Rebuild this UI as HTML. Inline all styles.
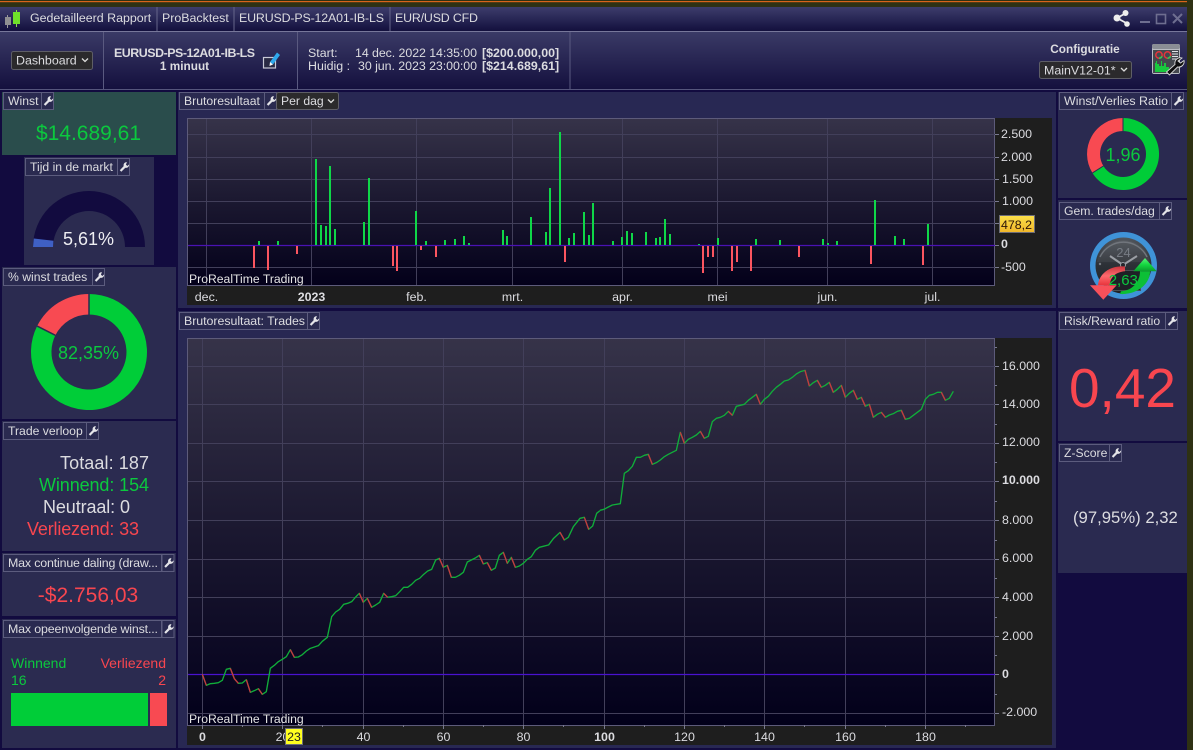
<!DOCTYPE html>
<html>
<head>
<meta charset="utf-8">
<style>
html,body{margin:0;padding:0;background:#120b3f;width:1193px;height:750px;overflow:hidden}
svg{display:block;position:absolute;left:0;top:0}
text{font-family:"Liberation Sans",sans-serif;font-size:12.4px;fill:#dcdce0}
.b{font-weight:bold}
.g{fill:#0bc93e}
.r{fill:#f8464f}
.m{text-anchor:middle}
.e{text-anchor:end}
.t{font-size:12.2px}
.lb{fill:#2a2a50;stroke:#5c5c7e;stroke-width:1}
.dd{fill:#2b2a2c;stroke:#5e5e66;stroke-width:1}
</style>
</head>
<body>
<svg width="1193" height="750" viewBox="0 0 1193 750" xmlns="http://www.w3.org/2000/svg">
<defs>
<linearGradient id="tb" x1="0" y1="0" x2="0" y2="1"><stop offset="0" stop-color="#3d3d6c"/><stop offset="1" stop-color="#13103d"/></linearGradient>
<linearGradient id="hd" x1="0" y1="0" x2="0" y2="1"><stop offset="0" stop-color="#3a3a66"/><stop offset="1" stop-color="#14103e"/></linearGradient>
<linearGradient id="pl1" x1="0" y1="0" x2="0" y2="1"><stop offset="0" stop-color="#363349"/><stop offset=".5" stop-color="#1b1830"/><stop offset="1" stop-color="#03001a"/></linearGradient>
<linearGradient id="pl2" x1="0" y1="0" x2="0" y2="1"><stop offset="0" stop-color="#363349"/><stop offset=".5" stop-color="#1b1830"/><stop offset=".85" stop-color="#0a0722"/><stop offset="1" stop-color="#02001a"/></linearGradient>
<linearGradient id="tag" x1="0" y1="0" x2="0" y2="1"><stop offset="0" stop-color="#fbe04a"/><stop offset="1" stop-color="#f0b62a"/></linearGradient>
<linearGradient id="gface" x1="0" y1="0" x2="0" y2="1"><stop offset="0" stop-color="#50555c"/><stop offset=".5" stop-color="#2c3036"/><stop offset="1" stop-color="#1f2227"/></linearGradient>
<linearGradient id="ra" x1="0" y1="0" x2="0" y2="1"><stop offset="0" stop-color="#c9343c"/><stop offset=".5" stop-color="#ff6a6e"/><stop offset="1" stop-color="#e8343c"/></linearGradient>
<linearGradient id="ga" x1="0" y1="0" x2="0" y2="1"><stop offset="0" stop-color="#5cf07a"/><stop offset=".5" stop-color="#14d840"/><stop offset="1" stop-color="#0a9c2c"/></linearGradient>
<g id="w"><path d="M9.4 3.2a3 3 0 0 0-3.2 3.9L2.3 11.2l1.5 1.5 4-4a3 3 0 0 0 3.8-3.3L9.9 7 8.4 5.6z" fill="#e4e4e8"/></g>
<path id="chev" d="M0 0l3 3 3-3" fill="none" stroke="#dcdcdc" stroke-width="1.3"/>
</defs>

<!-- frame -->
<rect width="1193" height="750" fill="#120b3f"/>
<rect width="1193" height="7" fill="#2e3113"/>
<rect y="1" width="1193" height="1.2" fill="#d9641a"/>
<rect x="1187" y="0" width="6" height="750" fill="#2e3113"/>

<!-- title bar -->
<rect y="7" width="1187" height="24" fill="url(#tb)"/>
<rect y="31" width="1187" height="1" fill="#77779a"/>
<path d="M157 7V31M234 7V31M390 7V31" stroke="#66668a"/>
<path d="M7.5 15V28" stroke="#9a9a9a"/><rect x="5" y="17" width="6" height="8" fill="#8f8f92"/>
<path d="M16.500 10V27" stroke="#8fe04a"/><rect x="13" y="12" width="7" height="12" fill="#6fe22a"/>
<text x="30" y="22">Gedetailleerd Rapport</text>
<text x="162" y="22">ProBacktest</text>
<text x="239" y="22" textLength="145">EURUSD-PS-12A01-IB-LS</text>
<text x="395" y="22" textLength="83">EUR/USD CFD</text>
<!-- share / window buttons -->
<g fill="#eeeeee" stroke="#eeeeee"><path d="M1128 12L1117 18L1128 24" fill="none" stroke-width="1.8"/><circle cx="1125.500" cy="13" r="3" stroke="none"/><circle cx="1117" cy="18" r="3.500" stroke="none"/><circle cx="1127" cy="24" r="2.800" stroke="none"/></g>
<rect x="1140" y="21" width="10" height="2" fill="#6e6e90"/>
<rect x="1156.500" y="14.500" width="9" height="9" fill="none" stroke="#6e6e90" stroke-width="1.600"/>
<path d="M1173 14L1182 23M1182 14L1173 23" stroke="#6e6e90" stroke-width="2"/>

<!-- header -->
<rect y="32" width="1187" height="57" fill="url(#hd)"/>
<rect y="89" width="1187" height="1" fill="#55557c"/>
<path d="M103.500 32V89M297.500 32V89M570 32V89" stroke="#5a5a80"/>
<rect x="11.500" y="51.500" width="81" height="18" rx="2" class="dd"/>
<text x="16" y="64.500">Dashboard</text>
<use href="#chev" x="82" y="58.500"/>
<text x="114" y="57" class="b" textLength="141">EURUSD-PS-12A01-IB-LS</text>
<text x="184.500" y="70" class="b m" style="font-size:11.800px">1 minuut</text>
<!-- edit icon -->
<rect x="263.500" y="57.500" width="12" height="10.500" fill="#2a2a44" stroke="#c9c9d6" stroke-width="1.200"/>
<path d="M270 62L277 52.500L280 55L273 64.500Z" fill="#2fa8ec"/><path d="M270 62L269.500 66L273 64.500Z" fill="#fff"/>
<text x="308" y="57">Start:</text>
<text x="308" y="70">Huidig :</text>
<text x="355" y="57" textLength="122">14 dec. 2022 14:35:00</text>
<text x="358" y="70" textLength="119">30 jun. 2023 23:00:00</text>
<text x="482" y="57" class="b">[$200.000,00]</text>
<text x="482" y="70" class="b">[$214.689,61]</text>
<text x="1085" y="53" class="b m" style="font-size:11.800px">Configuratie</text>
<rect x="1039.500" y="61.500" width="92" height="17" rx="2" class="dd"/>
<text x="1044" y="74.500">MainV12-01*</text>
<use href="#chev" x="1121" y="68"/>
<!-- config icon -->
<rect x="1152" y="44" width="28" height="30" rx="2" fill="#b9bcc2"/>
<rect x="1152" y="44" width="28" height="5" rx="2" fill="#8a8e95"/>
<rect x="1153" y="50" width="26" height="23" fill="#45484e"/>
<circle cx="1159" cy="55" r="3.200" fill="none" stroke="#e8343c" stroke-width="1.500"/>
<circle cx="1167.500" cy="55" r="3.200" fill="none" stroke="#e8343c" stroke-width="1.500"/>
<path d="M1159 58.200a3.200 3.200 0 0 0 3-2M1167.500 58.200a3.200 3.200 0 0 0 3-2" fill="none" stroke="#2ecc50" stroke-width="1.500"/>
<path d="M1172 51.500h6M1172 54h6M1172 56.500h6M1172 59h6" stroke="#e0e2e6"/>
<path d="M1155 72V63h1v-2h1v3h2v2h2v-5h1v5h2v-3h2v4h3v5z" fill="#18c93e"/>
<path d="M1182 58a5.500 5.500 0 0 0-7 6.500l-8.500 7.500 3 3 8-8a5.500 5.500 0 0 0 6.500-6.500l-3.500 2.500-2.500-2z" fill="#0e0e0e" stroke="#d8d8d8" stroke-width=".9"/>

<!-- left panels -->
<rect x="2" y="92" width="174" height="63" fill="#2a4d4c"/>
<rect x="24" y="157" width="130" height="108" fill="#2b2b50"/>
<rect x="2" y="267" width="174" height="152" fill="#2b2b50"/>
<rect x="2" y="421" width="174" height="130" fill="#2b2b50"/>
<rect x="2" y="553" width="174" height="63" fill="#2b2b50"/>
<rect x="2" y="619" width="174" height="129" fill="#2b2b50"/>

<!-- Winst -->
<rect x="3.500" y="92.500" width="38" height="17" class="lb"/><rect x="41.500" y="92.500" width="12" height="17" class="lb"/>
<text x="8" y="105" class="t">Winst</text><use href="#w" x="41.500" y="93"/>
<text x="88.500" y="140" class="m g" style="font-size:21px">$14.689,61</text>

<!-- Tijd -->
<rect x="25.500" y="158.500" width="92" height="17" class="lb"/><rect x="117.500" y="158.500" width="12" height="17" class="lb"/>
<text x="30" y="171" class="t">Tijd in de markt</text><use href="#w" x="117.500" y="159"/>
<path d="M33 247A56 56 0 0 1 145 247H125A36 36 0 0 0 53 247Z" fill="#120b3f"/>
<path d="M33 247L33.800 238.500L53.400 240.700L53 247Z" fill="#3f60c4"/>
<text x="88.500" y="245" class="m" style="font-size:18px;fill:#eeeef2">5,61%</text>

<!-- % winst -->
<rect x="3.500" y="268.500" width="89" height="17" class="lb"/><rect x="92.500" y="268.500" width="12" height="17" class="lb"/>
<text x="8" y="281" class="t">% winst trades</text><use href="#w" x="92.500" y="269"/>
<path d="M89 294A58 58 0 1 1 37.100 326.100L55.400 335.300A37.500 37.500 0 1 0 89 314.500Z" fill="#00cd38"/>
<path d="M89 294A58 58 0 0 0 37.100 326.100L55.400 335.300A37.500 37.500 0 0 1 89 314.500Z" fill="#f84a52"/>
<path d="M89 294V314.500M37.100 326.100L55.400 335.300" stroke="#2b2b50" stroke-width="1.500"/>
<text x="88.500" y="359" class="m g" style="font-size:18px">82,35%</text>

<!-- Trade verloop -->
<rect x="3.500" y="422.500" width="83" height="17" class="lb"/><rect x="86.500" y="422.500" width="12" height="17" class="lb"/>
<text x="8" y="435" class="t">Trade verloop</text><use href="#w" x="86.500" y="423"/>
<text x="60" y="469" style="font-size:18px" textLength="89">Totaal: 187</text>
<text x="39" y="491" class="g" style="font-size:18px" textLength="110">Winnend: 154</text>
<text x="43" y="513" style="font-size:18px" textLength="87">Neutraal: 0</text>
<text x="27" y="535" class="r" style="font-size:18px" textLength="112">Verliezend: 33</text>

<!-- Max continue -->
<rect x="3.500" y="554.500" width="158" height="17" class="lb"/><rect x="162" y="554.500" width="12" height="17" class="lb"/>
<text x="8" y="567" textLength="150">Max continue daling (draw...</text><use href="#w" x="162" y="555"/>
<text x="88" y="602" class="m r" style="font-size:21px">-$2.756,03</text>

<!-- Max opeen -->
<rect x="3.500" y="620.500" width="158" height="17" class="lb"/><rect x="162" y="620.500" width="12" height="17" class="lb"/>
<text x="8" y="633" textLength="150">Max opeenvolgende winst...</text><use href="#w" x="162" y="621"/>
<text x="11" y="668" class="g" style="font-size:14px">Winnend</text>
<text x="166" y="668" class="e r" style="font-size:14px">Verliezend</text>
<text x="11" y="685" class="g" style="font-size:14px">16</text>
<text x="166" y="685" class="e r" style="font-size:14px">2</text>
<rect x="11" y="693" width="137" height="33" fill="#00cd38"/>
<rect x="150" y="693" width="17" height="33" fill="#f84a52"/>

<!-- center panels -->
<rect x="178" y="92" width="878" height="216" fill="#282853"/>
<rect x="178" y="311" width="878" height="437" fill="#282853"/>

<!-- chart 1 -->
<rect x="179.500" y="92.500" width="85" height="17" class="lb"/><rect x="264.500" y="92.500" width="12" height="17" class="lb"/>
<text x="184" y="105" class="t">Brutoresultaat</text><use href="#w" x="264.500" y="93"/>
<rect x="276.500" y="92.500" width="62" height="17" rx="2" class="dd"/>
<text x="281" y="105" class="t">Per dag</text><use href="#chev" x="328" y="99.500"/>

<rect x="187" y="118" width="865" height="187" fill="#1e1e1e"/>
<rect x="187.500" y="118.500" width="807" height="167" fill="url(#pl1)" stroke="#5d5b7a"/>
<g stroke="#423f5a" stroke-width="1" fill="none">
<path d="M188 134.500H995M188 157.500H995M188 179.500H995M188 201.500H995M188 223.500H995M188 267.500H995"/>
<path d="M206.500 119V285M311.500 119V285M416.500 119V285M512.500 119V285M622.500 119V285M717.500 119V285M827.500 119V285M932.500 119V285"/>
</g>
<path d="M188 245.500H995" stroke="#4a12b4" stroke-width="1.200"/>
<path stroke="#0fd648" stroke-width="2" fill="none" d="M259 241V245M278 241V245M316 159V245M321 225V245M326 226V245M330 166V245M335 229V245M364 222V245M369 178V245M416 211V245M426 241V245M445 240V245M455 239V245M464 236V245M469 243V245M503 230V245M507 236V245M531 217V245M546 232V245M550 188V245M560 132V245M569 238V245M574 233V245M584 212V245M589 235V245M593 203V245M613 241V245M622 237V245M627 231V245M632 233V245M646 232V245M656 238V245M660 237V245M665 219V245M670 234V245M699 244V245M718 238V245M756 239V245M780 240V245M823 239V245M828 243V245M837 241V245M875 200V245M895 236V245M904 239V245M928 224V245"/>
<path stroke="#fb5560" stroke-width="2" fill="none" d="M254 246V268M268 246V270M297 246V254M393 246V266M397 246V271M421 246V250M436 246V257M565 246V262M703 246V273M708 246V257M713 246V257M732 246V271M737 246V262M751 246V271M799 246V257M871 246V264M923 246V265"/>
<text x="189" y="283" class="t" style="fill:#e4e4e4">ProRealTime Trading</text>
<g stroke="#7a7a90"><path d="M995 134.500h4M995 157.500h4M995 179.500h4M995 201.500h4M995 223.500h4M995 245.500h4M995 267.500h4"/></g>
<text x="1001" y="138">2.500</text>
<text x="1001" y="161">2.000</text>
<text x="1002" y="183">1.500</text>
<text x="1002" y="205">1.000</text>
<text x="1001" y="248" class="b">0</text>
<text x="1001" y="271">-500</text>
<rect x="999.500" y="215.500" width="35" height="17" fill="url(#tag)" stroke="#6c6c78"/>
<text x="1001" y="229" style="fill:#2a1408">478,2</text>
<g>
<text x="206.500" y="301" class="m">dec.</text>
<text x="311.500" y="301" class="m b">2023</text>
<text x="416.500" y="301" class="m">feb.</text>
<text x="512.500" y="301" class="m">mrt.</text>
<text x="622.500" y="301" class="m">apr.</text>
<text x="717.500" y="301" class="m">mei</text>
<text x="827.500" y="301" class="m">jun.</text>
<text x="932.500" y="301" class="m">jul.</text>
</g>

<!-- chart 2 -->
<rect x="179.500" y="312.500" width="128" height="17" class="lb"/><rect x="307.500" y="312.500" width="12" height="17" class="lb"/>
<text x="184" y="325" textLength="121">Brutoresultaat: Trades</text><use href="#w" x="307.500" y="313"/>

<rect x="187" y="338" width="865" height="407" fill="#1e1e1e"/>
<rect x="187.500" y="338.500" width="807" height="387" fill="url(#pl2)" stroke="#5d5b7a"/>
<g stroke="#423f5a" stroke-width="1" fill="none">
<path d="M188 366.500H995M188 404.500H995M188 443.500H995M188 481.500H995M188 520.500H995M188 559.500H995M188 597.500H995M188 636.500H995M188 713.500H995"/>
<path d="M202.500 339V725M282.500 339V725M363.500 339V725M443.500 339V725M523.500 339V725M604.500 339V725M684.500 339V725M764.500 339V725M845.500 339V725M925.500 339V725"/>
</g>
<path d="M188 674.500H995" stroke="#4a12d0" stroke-width="1.200"/>
<g fill="none" stroke-linejoin="round">
<g transform="translate(180,540) scale(.33333)" stroke-width="4">
<path stroke="#10ae3a" d="M67 403L79 436L91 431L103 430L115 428L127 421L139 388L151 385L163 416L175 430L187 429L199 419L211 457L223 452L235 446L247 463L259 455L271 385L283 376L295 365L307 358L319 350L331 329L343 352L355 351L367 344L379 333L391 325L403 321L415 317L427 304L442 292L455 230L467 216L479 208L491 193L503 190L515 185L527 171L538 160L550 187L562 175L575 202L587 195L599 187L611 160L623 172L635 170L647 167L659 155L671 142L683 142L695 133L707 121L719 115L731 103L743 93L755 88L767 60L778 55L790 82L802 76L814 112L826 112L838 106L850 97L862 66L874 60L886 54L898 46L910 72L922 68L934 91L946 84L958 46L970 37L982 70L994 52L1006 82L1018 78L1030 70L1042 58L1054 50L1066 31L1078 22L1090 19L1105 15"/>
<path stroke="#c8363f" d="M67 403L79 436M151 385L163 416L175 430M199 419L211 457M235 446L247 463M331 329L343 352M538 160L550 187M562 175L575 202M611 160L623 172M778 55L790 82M802 76L814 112M898 46L910 72M922 68L934 91M970 37L982 70M994 52L1006 82"/>
</g>
<g transform="translate(180,310) scale(.33333)" stroke-width="4">
<path stroke="#10ae3a" d="M1105 706L1120 686L1140 667L1153 690L1165 682L1180 650L1200 625L1213 622L1226 658L1238 648L1250 610L1260 602"/>
<path stroke="#c8363f" d="M1140 667L1153 690M1213 622L1226 658"/>
</g>
<g transform="translate(600,340) scale(.33333)" stroke-width="4">
<path stroke="#10ae3a" d="M0 511L12 508L25 501L37 495L61 491L73 400L85 392L97 379L109 352L121 352L133 346L145 343L157 373L169 368L181 360L193 350L205 343L217 337L229 331L241 277L253 310L265 298L277 292L289 285L301 274L313 295L325 289L337 245L349 235L361 232L373 226L385 214L397 226L409 199L421 196L433 193L445 181L457 172L469 163L481 193L493 178L505 169L517 154L529 142L541 133L553 123L565 120L577 112L589 102L601 95L615 91L628 138L640 128L652 121L664 142L676 136L688 127L700 157L712 148L724 136L736 172L748 160L760 151L772 178L784 172L796 199L808 193L820 232L832 223L844 217L856 232L868 225L880 221L892 214L904 211L916 238L928 235L940 226L952 217L964 208L976 178L988 166L1000 163L1012 157L1024 157L1036 181L1048 175L1060 154"/>
<path stroke="#c8363f" d="M145 343L157 373M241 277L253 310M301 274L313 295M385 214L397 226M469 163L481 193M615 91L628 138M652 121L664 142M688 127L700 157M724 136L736 172M760 151L772 178M784 172L796 199M808 193L820 232M844 217L856 232M904 211L916 238M1024 157L1036 181"/>
</g>
</g>
<text x="189" y="723" class="t" style="fill:#e4e4e4">ProRealTime Trading</text>
<g stroke="#7a7a90">
<path d="M995 366.500h4M995 404.500h4M995 443.500h4M995 481.500h4M995 520.500h4M995 559.500h4M995 597.500h4M995 636.500h4M995 674.500h4M995 713.500h4"/>
<path d="M995 347.500h2M995 385.500h2M995 424.500h2M995 462.500h2M995 501.500h2M995 540.500h2M995 578.500h2M995 617.500h2M995 655.500h2M995 694.500h2"/>
<path d="M202.500 725v4M282.500 725v4M363.500 725v4M443.500 725v4M523.500 725v4M604.500 725v4M684.500 725v4M764.500 725v4M845.500 725v4M925.500 725v4"/>
<path d="M242.500 725v2M322.500 725v2M403.500 725v2M483.500 725v2M563.500 725v2M644.500 725v2M724.500 725v2M804.500 725v2M885.500 725v2M965.500 725v2"/>
</g>
<text x="1002" y="370">16.000</text>
<text x="1002" y="408">14.000</text>
<text x="1002" y="446">12.000</text>
<text x="1002" y="484" class="b">10.000</text>
<text x="1002" y="524">8.000</text>
<text x="1002" y="562">6.000</text>
<text x="1002" y="601">4.000</text>
<text x="1002" y="640">2.000</text>
<text x="1002" y="678" class="b">0</text>
<text x="1002" y="716">-2.000</text>
<text x="202.500" y="741" class="m b">0</text>
<text x="282.500" y="741" class="m">20</text>
<text x="363.500" y="741" class="m">40</text>
<text x="443.500" y="741" class="m">60</text>
<text x="523.500" y="741" class="m">80</text>
<text x="604.500" y="741" class="m b">100</text>
<text x="684.500" y="741" class="m">120</text>
<text x="764.500" y="741" class="m">140</text>
<text x="845.500" y="741" class="m">160</text>
<text x="925.500" y="741" class="m">180</text>
<rect x="285.500" y="728.500" width="17" height="16" fill="#ffff20" stroke="#6e6e78"/>
<text x="294" y="741" class="m" style="fill:#222">23</text>

<!-- right panels -->
<rect x="1058" y="92" width="129" height="106" fill="#2a2a50"/>
<rect x="1058" y="200" width="129" height="108" fill="#2a2a50"/>
<rect x="1058" y="311" width="129" height="130" fill="#2a2a50"/>
<rect x="1058" y="443" width="129" height="130" fill="#2a2a50"/>

<rect x="1059.500" y="92.500" width="112" height="17" class="lb"/><rect x="1171.500" y="92.500" width="12" height="17" class="lb"/>
<text x="1064" y="105">Winst/Verlies Ratio</text><use href="#w" x="1171.500" y="93"/>
<path d="M1123 118A36 36 0 1 1 1092.400 172.900L1103.400 166A23 23 0 1 0 1123 131Z" fill="#00cd38"/>
<path d="M1123 118A36 36 0 0 0 1092.400 172.900L1103.400 166A23 23 0 0 1 1123 131Z" fill="#f84a52"/>
<path d="M1123 118V131M1092.400 172.900L1103.400 166" stroke="#2a2a50" stroke-width="1"/>
<text x="1123" y="161" class="m g" style="font-size:18px">1,96</text>

<rect x="1059.500" y="202.500" width="100" height="17" class="lb"/><rect x="1159.500" y="202.500" width="12" height="17" class="lb"/>
<text x="1064" y="215" class="t">Gem. trades/dag</text><use href="#w" x="1159.500" y="203"/>
<!-- gauge icon -->
<circle cx="1123.500" cy="265.500" r="33.500" fill="#3f93d8"/>
<circle cx="1123.500" cy="265.500" r="28" fill="url(#gface)"/>
<path d="M1100 257A26 26 0 0 1 1147 257" fill="none" stroke="#6a6f76" stroke-width="1.400"/>
<path d="M1097 262A27 27 0 0 1 1150 262Z" fill="#ffffff" opacity=".05"/>
<text x="1123.500" y="257" class="m" style="font-size:13px;fill:#777c84">24</text>
<path d="M1110 256L1123 265L1137 256" fill="none" stroke="#9a9ea4" stroke-width="2"/>
<circle cx="1123" cy="265" r="2.500" fill="#23262c" stroke="#9a9ea4"/>
<circle cx="1100" cy="264" r="1.200" fill="#777c84"/>
<rect x="1107.500" y="270.500" width="33" height="20" fill="#1e2126" stroke="#4c4f55"/>
<path d="M1125 266.500C1111 265 1099 273 1098 285.300H1110C1110 277 1116 272 1125 271.300Z" fill="url(#ra)"/>
<path d="M1090 285.300H1116.700L1103.300 299.700Z" fill="#f8505a"/>
<path d="M1121 291.300C1131 291 1140 283 1140 271.300H1150C1150 285 1136 295 1120 294Z" fill="#0cbf36"/>
<path d="M1133.300 271.300H1156.700L1145 258Z" fill="url(#ga)"/>
<text x="1123.300" y="285" class="m g" style="font-size:15px">2,63</text>

<rect x="1059.500" y="312.500" width="106" height="17" class="lb"/><rect x="1165.500" y="312.500" width="12" height="17" class="lb"/>
<text x="1064" y="325" class="t">Risk/Reward ratio</text><use href="#w" x="1165.500" y="313"/>
<text x="1122.500" y="407" class="m r" style="font-size:55px">0,42</text>

<rect x="1059.500" y="444.500" width="50" height="17" class="lb"/><rect x="1109.500" y="444.500" width="12" height="17" class="lb"/>
<text x="1064" y="457" class="t">Z-Score</text><use href="#w" x="1109.500" y="445"/>
<text x="1073" y="523" style="font-size:16.700px">(97,95%) 2,32</text>
</svg>
</body>
</html>
